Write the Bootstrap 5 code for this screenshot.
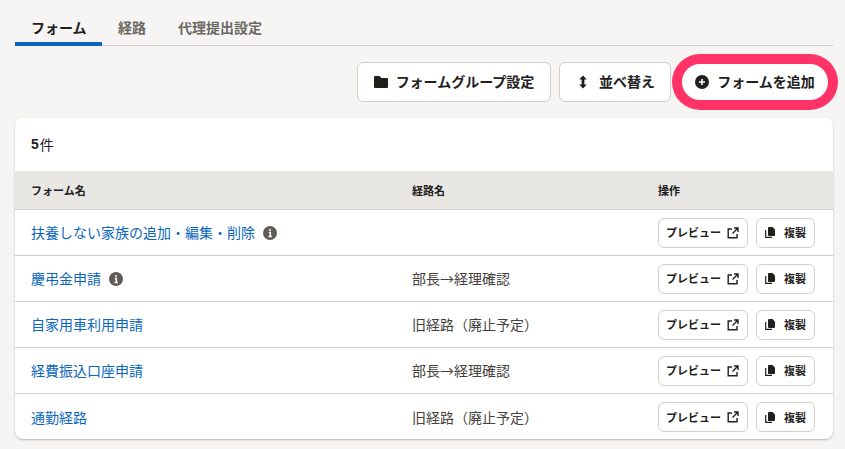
<!DOCTYPE html>
<html lang="ja"><head><meta charset="utf-8">
<link href="https://cdn.jsdelivr.net/npm/bootstrap@5.3.0/dist/css/bootstrap.min.css" rel="stylesheet">
<style>
html,body{height:100%}
body{background:#f6f5f3;color:#22201c;font-family:"Noto Sans CJK JP","Liberation Sans",sans-serif;font-size:14px;overflow:hidden;padding:15px 12px 0 15px}
.tabbar{height:31px;border-bottom:1px solid #cfcdc9}
.tabitem{height:31px;padding:0 16px;font-size:14px;font-weight:700;color:#6b6862;line-height:24px;white-space:nowrap}
.tabitem.on{color:#22201c;border-bottom:4px solid #0b67bd;width:87px;padding:0 16px}
.tools{height:40px;margin-top:16px;margin-bottom:16px}
.toolbtn{height:40px;background:#fff;border:1px solid #d2cec8;border-radius:6px;font-size:14px;font-weight:700;color:#22201c;white-space:nowrap;padding-top:0;padding-bottom:2px}
.toolbtn svg{margin-top:2px}
.sortbtn{gap:11px;padding-left:18px;padding-right:0}
.hilite{height:36px;width:146px;margin-left:11px;margin-right:5px;border-radius:18px;border:0;box-shadow:0 0 0 10px #ff3366}
.sheet{background:#fff;border-radius:8px;box-shadow:0 1px 2px rgba(0,0,0,.25);height:321px;overflow:hidden}
.countline{height:53px;padding:0 16px;font-size:14px}
.countline b{font-family:"Liberation Sans",sans-serif;letter-spacing:1px}
.rowline{height:46px;border-bottom:1px solid #cfcdc9}
.rowline:last-child{border-bottom:0}
.headline{height:39px;background:#e8e7e3;border-bottom:1px solid #cfcdc9;font-size:11px;font-weight:700}
.c1{width:397px;padding-left:16px}
.c2{width:246px}
.rowline a{color:#0b67bd;text-decoration:none;font-size:14px}
.route{font-size:14px;color:#45423d}
.infodot{width:14px;height:14px;margin-left:8px;display:block}
.minibtn{height:30px;background:#fff;border:1px solid #d2cec8;border-radius:6px;font-size:11px;font-weight:700;color:#22201c;white-space:nowrap}
.pv{width:90px;gap:6px;padding:0 0 0 7px}.cp{width:59px;margin-left:8px;gap:9px;padding:0}
</style></head><body>
<div class="tabbar d-flex">
<div class="tabitem on">フォーム</div><div class="tabitem">経路</div><div class="tabitem">代理提出設定</div>
</div>
<div class="tools d-flex justify-content-end align-items-center">
<button class="toolbtn d-flex align-items-center justify-content-center gap-2 px-0" style="width:194px"><svg width="14" height="14" viewBox="0 0 14 14"><path fill="#22201c" d="M1 1h4.6l1.6 1.9H13a1 1 0 0 1 1 1V12a1 1 0 0 1-1 1H1a1 1 0 0 1-1-1V2a1 1 0 0 1 1-1z"/></svg>フォームグループ設定</button>
<button class="toolbtn sortbtn d-flex align-items-center ms-2" style="width:112px"><svg width="10" height="14" viewBox="0 0 10 14"><path fill="#22201c" d="M5 .5 8.8 4.6H6.4v4.8h2.4L5 13.5 1.2 9.4h2.4V4.6H1.2z"/></svg>並べ替え</button>
<button class="toolbtn hilite d-flex align-items-center justify-content-center gap-2 px-0"><svg width="14" height="14" viewBox="0 0 14 14"><circle cx="7" cy="7" r="7" fill="#22201c"/><path d="M7 4v6M4 7h6" stroke="#fff" stroke-width="1.6"/></svg>フォームを追加</button>
</div>
<div class="sheet">
<div class="countline d-flex align-items-center"><b>5</b>件</div>
<div class="headline d-flex align-items-center"><div class="c1">フォーム名</div><div class="c2">経路名</div><div>操作</div></div>
<div class="rowline d-flex align-items-center"><div class="c1 d-flex align-items-center"><a href="#">扶養しない家族の追加・編集・削除</a><svg class="infodot" viewBox="0 0 14 14"><circle cx="7" cy="7" r="7" fill="#5f5c56"/><path d="M7 3v2M5.8 6.6H7.3V10.5M5.6 10.6h3.2" stroke="#fff" stroke-width="1.5" fill="none"/></svg></div><div class="c2 route"></div><div class="d-flex"><button class="minibtn pv d-flex align-items-center">プレビュー<svg width="12" height="12" viewBox="0 0 12 12" fill="none" stroke="#22201c" stroke-width="1.4"><path d="M5 2H1.2v8.8H10V7M7 1h4v4M11 1 5.5 6.5"/></svg></button><button class="minibtn cp d-flex align-items-center justify-content-center"><svg width="10" height="11" viewBox="0 0 10 11"><path fill="#22201c" d="M4 0h3.5L10 2.5V8a1 1 0 0 1-1 1H4a1 1 0 0 1-1-1V1a1 1 0 0 1 1-1z"/><path fill="none" stroke="#22201c" stroke-width="1.2" d="M.7 3v7.3H7"/></svg>複製</button></div></div>
<div class="rowline d-flex align-items-center"><div class="c1 d-flex align-items-center"><a href="#">慶弔金申請</a><svg class="infodot" viewBox="0 0 14 14"><circle cx="7" cy="7" r="7" fill="#5f5c56"/><path d="M7 3v2M5.8 6.6H7.3V10.5M5.6 10.6h3.2" stroke="#fff" stroke-width="1.5" fill="none"/></svg></div><div class="c2 route">部長→経理確認</div><div class="d-flex"><button class="minibtn pv d-flex align-items-center">プレビュー<svg width="12" height="12" viewBox="0 0 12 12" fill="none" stroke="#22201c" stroke-width="1.4"><path d="M5 2H1.2v8.8H10V7M7 1h4v4M11 1 5.5 6.5"/></svg></button><button class="minibtn cp d-flex align-items-center justify-content-center"><svg width="10" height="11" viewBox="0 0 10 11"><path fill="#22201c" d="M4 0h3.5L10 2.5V8a1 1 0 0 1-1 1H4a1 1 0 0 1-1-1V1a1 1 0 0 1 1-1z"/><path fill="none" stroke="#22201c" stroke-width="1.2" d="M.7 3v7.3H7"/></svg>複製</button></div></div>
<div class="rowline d-flex align-items-center"><div class="c1"><a href="#">自家用車利用申請</a></div><div class="c2 route">旧経路（廃止予定）</div><div class="d-flex"><button class="minibtn pv d-flex align-items-center">プレビュー<svg width="12" height="12" viewBox="0 0 12 12" fill="none" stroke="#22201c" stroke-width="1.4"><path d="M5 2H1.2v8.8H10V7M7 1h4v4M11 1 5.5 6.5"/></svg></button><button class="minibtn cp d-flex align-items-center justify-content-center"><svg width="10" height="11" viewBox="0 0 10 11"><path fill="#22201c" d="M4 0h3.5L10 2.5V8a1 1 0 0 1-1 1H4a1 1 0 0 1-1-1V1a1 1 0 0 1 1-1z"/><path fill="none" stroke="#22201c" stroke-width="1.2" d="M.7 3v7.3H7"/></svg>複製</button></div></div>
<div class="rowline d-flex align-items-center"><div class="c1"><a href="#">経費振込口座申請</a></div><div class="c2 route">部長→経理確認</div><div class="d-flex"><button class="minibtn pv d-flex align-items-center">プレビュー<svg width="12" height="12" viewBox="0 0 12 12" fill="none" stroke="#22201c" stroke-width="1.4"><path d="M5 2H1.2v8.8H10V7M7 1h4v4M11 1 5.5 6.5"/></svg></button><button class="minibtn cp d-flex align-items-center justify-content-center"><svg width="10" height="11" viewBox="0 0 10 11"><path fill="#22201c" d="M4 0h3.5L10 2.5V8a1 1 0 0 1-1 1H4a1 1 0 0 1-1-1V1a1 1 0 0 1 1-1z"/><path fill="none" stroke="#22201c" stroke-width="1.2" d="M.7 3v7.3H7"/></svg>複製</button></div></div>
<div class="rowline d-flex align-items-center"><div class="c1"><a href="#">通勤経路</a></div><div class="c2 route">旧経路（廃止予定）</div><div class="d-flex"><button class="minibtn pv d-flex align-items-center">プレビュー<svg width="12" height="12" viewBox="0 0 12 12" fill="none" stroke="#22201c" stroke-width="1.4"><path d="M5 2H1.2v8.8H10V7M7 1h4v4M11 1 5.5 6.5"/></svg></button><button class="minibtn cp d-flex align-items-center justify-content-center"><svg width="10" height="11" viewBox="0 0 10 11"><path fill="#22201c" d="M4 0h3.5L10 2.5V8a1 1 0 0 1-1 1H4a1 1 0 0 1-1-1V1a1 1 0 0 1 1-1z"/><path fill="none" stroke="#22201c" stroke-width="1.2" d="M.7 3v7.3H7"/></svg>複製</button></div></div>
</div>
<script src="https://cdn.jsdelivr.net/npm/bootstrap@5.3.0/dist/js/bootstrap.bundle.min.js"></script>
</body></html>
